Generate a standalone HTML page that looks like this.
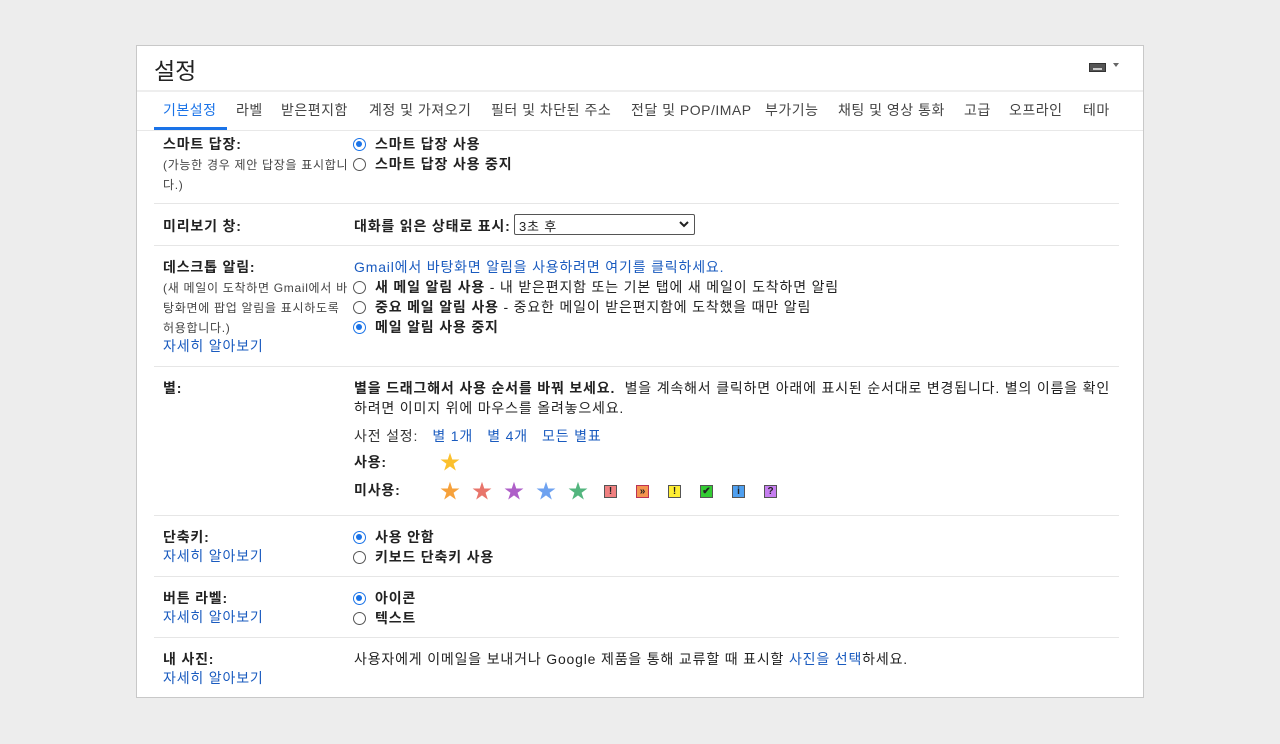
<!DOCTYPE html>
<html><head><meta charset="utf-8"><style>
*{margin:0;padding:0;box-sizing:border-box}
body{width:1280px;height:744px;background:#ededed;font-family:"Liberation Sans","Noto Sans CJK KR",sans-serif;font-size:14px;letter-spacing:0.82px;color:#222;position:relative;overflow:hidden}
#p{position:absolute;left:136px;top:45px;width:1008px;height:653px;background:#fff;border:1px solid #c8c8c8}
.a{position:absolute;white-space:nowrap}
.b{font-weight:bold}
.l{color:#1a5bbf}
.g{color:#444;font-size:12px;letter-spacing:0.7px}
.sep{position:absolute;left:17px;width:965px;height:1px;background:#e6e6e6}
.r{position:absolute;width:13px;height:13px;border:1.3px solid #555;border-radius:50%}
.r.on{border-color:#1a73e8}
.r.on::after{content:"";position:absolute;left:2px;top:2px;width:6.4px;height:6.4px;border-radius:50%;background:#1a73e8}
.tab{position:absolute;top:54px;font-size:14px;color:#444;letter-spacing:0.5px}
.st{position:absolute;font-size:20px;line-height:20px;letter-spacing:0}
.bx{position:absolute;width:13px;height:13px;font-size:10px;font-weight:bold;text-align:center;line-height:12px;border:1px solid #555;letter-spacing:0}
</style></head><body>
<div id="p">
<div class="a" style="left:17px;top:6px;font-size:23px;color:#222;letter-spacing:0">설정</div>
<div class="a" style="left:952px;top:17px;width:17px;height:9px;background:#555;border:1px solid #333"></div>
<div class="a" style="left:956px;top:22px;width:9px;height:2px;background:#ccc"></div>
<div class="a" style="left:976px;top:17px;width:0;height:0;border-left:3px solid transparent;border-right:3px solid transparent;border-top:4px solid #666"></div>
<div class="a" style="left:0;top:44px;width:1006px;height:2px;background:#eee"></div>
<div class="tab" style="left:26px;color:#1a73e8">기본설정</div>
<div class="tab" style="left:99px">라벨</div>
<div class="tab" style="left:144px">받은편지함</div>
<div class="tab" style="left:232px">계정 및 가져오기</div>
<div class="tab" style="left:354px">필터 및 차단된 주소</div>
<div class="tab" style="left:494px">전달 및 POP/IMAP</div>
<div class="tab" style="left:628px">부가기능</div>
<div class="tab" style="left:701px">채팅 및 영상 통화</div>
<div class="tab" style="left:827px">고급</div>
<div class="tab" style="left:872px">오프라인</div>
<div class="tab" style="left:946px">테마</div>
<div class="a" style="left:17px;top:81px;width:73px;height:3px;background:#1a73e8"></div>
<div class="a" style="left:0;top:84px;width:1006px;height:1px;background:#e8e8e8"></div>

<div class="a b" style="left:26px;top:88px">스마트 답장:</div>
<div class="a g" style="left:26px;top:110px">(가능한 경우 제안 답장을 표시합니</div>
<div class="a g" style="left:26px;top:130px">다.)</div>
<div class="r on" style="left:216px;top:92px"></div><div class="a b" style="left:238px;top:88px">스마트 답장 사용</div>
<div class="r" style="left:216px;top:112px"></div><div class="a b" style="left:238px;top:108px">스마트 답장 사용 중지</div>
<div class="sep" style="top:157px"></div>

<div class="a b" style="left:26px;top:170px">미리보기 창:</div>
<div class="a b" style="left:217px;top:170px">대화를 읽은 상태로 표시:</div>
<div class="a" style="left:377px;top:168px;width:181px;height:21px;border:1px solid #555;border-radius:2px;padding:1px 4px;font-size:13px">3초 후<svg style="position:absolute;right:5px;top:6px" width="10" height="7" viewBox="0 0 10 7"><path d="M1 1 L5 5 L9 1" fill="none" stroke="#222" stroke-width="2"/></svg></div>
<div class="sep" style="top:199px"></div>

<div class="a b" style="left:26px;top:211px">데스크톱 알림:</div>
<div class="a g" style="left:26px;top:233px">(새 메일이 도착하면 Gmail에서 바</div>
<div class="a g" style="left:26px;top:253px">탕화면에 팝업 알림을 표시하도록</div>
<div class="a g" style="left:26px;top:273px">허용합니다.)</div>
<div class="a l" style="left:26px;top:290px">자세히 알아보기</div>
<div class="a l" style="left:217px;top:211px">Gmail에서 바탕화면 알림을 사용하려면 여기를 클릭하세요.</div>
<div class="r" style="left:216px;top:235px"></div><div class="a" style="left:238px;top:231px"><b>새 메일 알림 사용</b> - 내 받은편지함 또는 기본 탭에 새 메일이 도착하면 알림</div>
<div class="r" style="left:216px;top:255px"></div><div class="a" style="left:238px;top:251px"><b>중요 메일 알림 사용</b> - 중요한 메일이 받은편지함에 도착했을 때만 알림</div>
<div class="r on" style="left:216px;top:275px"></div><div class="a b" style="left:238px;top:271px">메일 알림 사용 중지</div>
<div class="sep" style="top:320px"></div>

<div class="a b" style="left:26px;top:332px">별:</div>
<div class="a" style="left:217px;top:332px"><b>별을 드래그해서 사용 순서를 바꿔 보세요.</b> &nbsp;별을 계속해서 클릭하면 아래에 표시된 순서대로 변경됩니다. 별의 이름을 확인</div>
<div class="a" style="left:217px;top:352px">하려면 이미지 위에 마우스를 올려놓으세요.</div>
<div class="a" style="left:217px;top:380px;color:#333">사전 설정: &nbsp;&nbsp;<span class="l">별 1개 &nbsp;&nbsp;별 4개 &nbsp;&nbsp;모든 별표</span></div>
<div class="a b" style="left:217px;top:406px">사용:</div>
<div class="st" style="left:303px;top:407px;color:#fbc02d">★</div>
<div class="a b" style="left:217px;top:434px">미사용:</div>
<div class="st" style="left:303px;top:436px;color:#f6a13b">★</div>
<div class="st" style="left:335px;top:436px;color:#e8756b">★</div>
<div class="st" style="left:367px;top:436px;color:#ae5fc8">★</div>
<div class="st" style="left:399px;top:436px;color:#6ea2f0">★</div>
<div class="st" style="left:431px;top:436px;color:#53b57e">★</div>
<div class="bx" style="left:467px;top:439px;background:#f08080">!</div>
<div class="bx" style="left:499px;top:439px;background:#f5944f;border-color:#b35">»</div>
<div class="bx" style="left:531px;top:439px;background:#ffee33">!</div>
<div class="bx" style="left:563px;top:439px;background:#33cc33">✔</div>
<div class="bx" style="left:595px;top:439px;background:#4fa0f0">i</div>
<div class="bx" style="left:627px;top:439px;background:#c67ef0">?</div>
<div class="sep" style="top:469px"></div>

<div class="a b" style="left:26px;top:481px">단축키:</div>
<div class="a l" style="left:26px;top:500px">자세히 알아보기</div>
<div class="r on" style="left:216px;top:485px"></div><div class="a b" style="left:238px;top:481px">사용 안함</div>
<div class="r" style="left:216px;top:505px"></div><div class="a b" style="left:238px;top:501px">키보드 단축키 사용</div>
<div class="sep" style="top:530px"></div>

<div class="a b" style="left:26px;top:542px">버튼 라벨:</div>
<div class="a l" style="left:26px;top:561px">자세히 알아보기</div>
<div class="r on" style="left:216px;top:546px"></div><div class="a b" style="left:238px;top:542px">아이콘</div>
<div class="r" style="left:216px;top:566px"></div><div class="a b" style="left:238px;top:562px">텍스트</div>
<div class="sep" style="top:591px"></div>

<div class="a b" style="left:26px;top:603px">내 사진:</div>
<div class="a l" style="left:26px;top:622px">자세히 알아보기</div>
<div class="a" style="left:217px;top:603px">사용자에게 이메일을 보내거나 Google 제품을 통해 교류할 때 표시할 <span class="l">사진을 선택</span>하세요.</div>
</div>
</body></html>
